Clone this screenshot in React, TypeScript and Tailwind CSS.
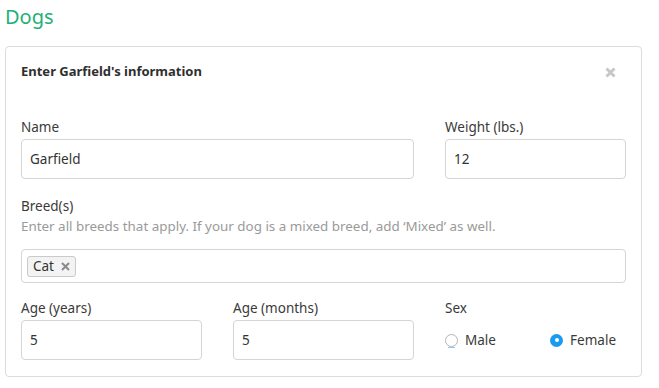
import React from "react";

const font = { fontFamily: "'Noto Sans', Lato, sans-serif" };

function Field({ label, value }: { label: string; value: string }) {
  return (
    <div className="flex flex-col">
      <div className="text-[13.5px] leading-[18px] text-[#3a3a3a]">{label}</div>
      <div className="mt-[3px] h-[40px] rounded-[4px] border border-[#d4d4d4] bg-white px-[8px] flex items-center text-[13.5px] text-[#333]">
        {value}
      </div>
    </div>
  );
}

export default function App() {
  return (
    <div className="w-[659px] h-[388px] bg-white overflow-hidden" style={font}>
      <div className="pl-[5px] pt-[3px] text-[20px] leading-[28px] text-[#1fb077]">Dogs</div>
      <div className="ml-[5px] mt-[15px] w-[637px] rounded-[4px] border border-[#dcdcdc] px-[15px] pt-[15px] pb-[16px]">
        <div className="flex items-center justify-between h-[20px]">
          <div className="text-[13px] font-bold text-[#2f2f2f]">Enter Garfield's information</div>
          <svg width="11" height="11" viewBox="0 0 11 11" className="mr-[10px]">
            <path d="M1.5 1.5 L9.5 9.5 M9.5 1.5 L1.5 9.5" stroke="#c8c8c8" strokeWidth="3" strokeLinecap="butt" />
          </svg>
        </div>
        <div className="mt-[36px] grid grid-cols-3 gap-x-[31px]">
          <div className="col-span-2">
            <Field label="Name" value="Garfield" />
          </div>
          <Field label="Weight (lbs.)" value="12" />
        </div>
        <div className="mt-[18px]">
          <div className="text-[13.5px] leading-[18px] text-[#3a3a3a]">Breed(s)</div>
          <div className="mt-[2px] text-[13.4px] leading-[18px] text-[#9a9a9a]">
            Enter all breeds that apply. If your dog is a mixed breed, add ‘Mixed’ as well.
          </div>
          <div className="mt-[14px] h-[34px] rounded-[4px] border border-[#d4d4d4] bg-white px-[5px] flex items-center">
            <div className="h-[21px] rounded-[3px] border border-[#cacaca] bg-[#f3f3f3] pl-[5px] pr-[5px] flex items-center gap-[7px] text-[13.5px] text-[#333]">
              <span>Cat</span>
              <svg width="9" height="9" viewBox="0 0 9 9">
                <path d="M1 1 L8 8 M8 1 L1 8" stroke="#8a8a8a" strokeWidth="2" />
              </svg>
            </div>
          </div>
        </div>
        <div className="mt-[16px] grid grid-cols-3 gap-x-[31px]">
          <Field label="Age (years)" value="5" />
          <Field label="Age (months)" value="5" />
          <div className="flex flex-col">
            <div className="text-[13.5px] leading-[18px] text-[#3a3a3a]">Sex</div>
            <div className="mt-[3px] h-[40px] flex items-center justify-between pr-[10px]">
              <div className="flex items-center gap-[7px] relative">
                <span className="w-[13px] h-[13px] rounded-full border border-[#b5b5b5] bg-white" />
                <span className="absolute left-[3px] top-[17px] w-[7px] h-[1px] bg-[#8cc8f2]" />
                <span className="text-[13.5px] text-[#3a3a3a]">Male</span>
              </div>
              <div className="flex items-center gap-[7px]">
                <span className="w-[13px] h-[13px] rounded-full bg-[#1a9bef] flex items-center justify-center">
                  <span className="w-[4px] h-[4px] rounded-full bg-white" />
                </span>
                <span className="text-[13.5px] text-[#3a3a3a]">Female</span>
              </div>
            </div>
          </div>
        </div>
      </div>
    </div>
  );
}
